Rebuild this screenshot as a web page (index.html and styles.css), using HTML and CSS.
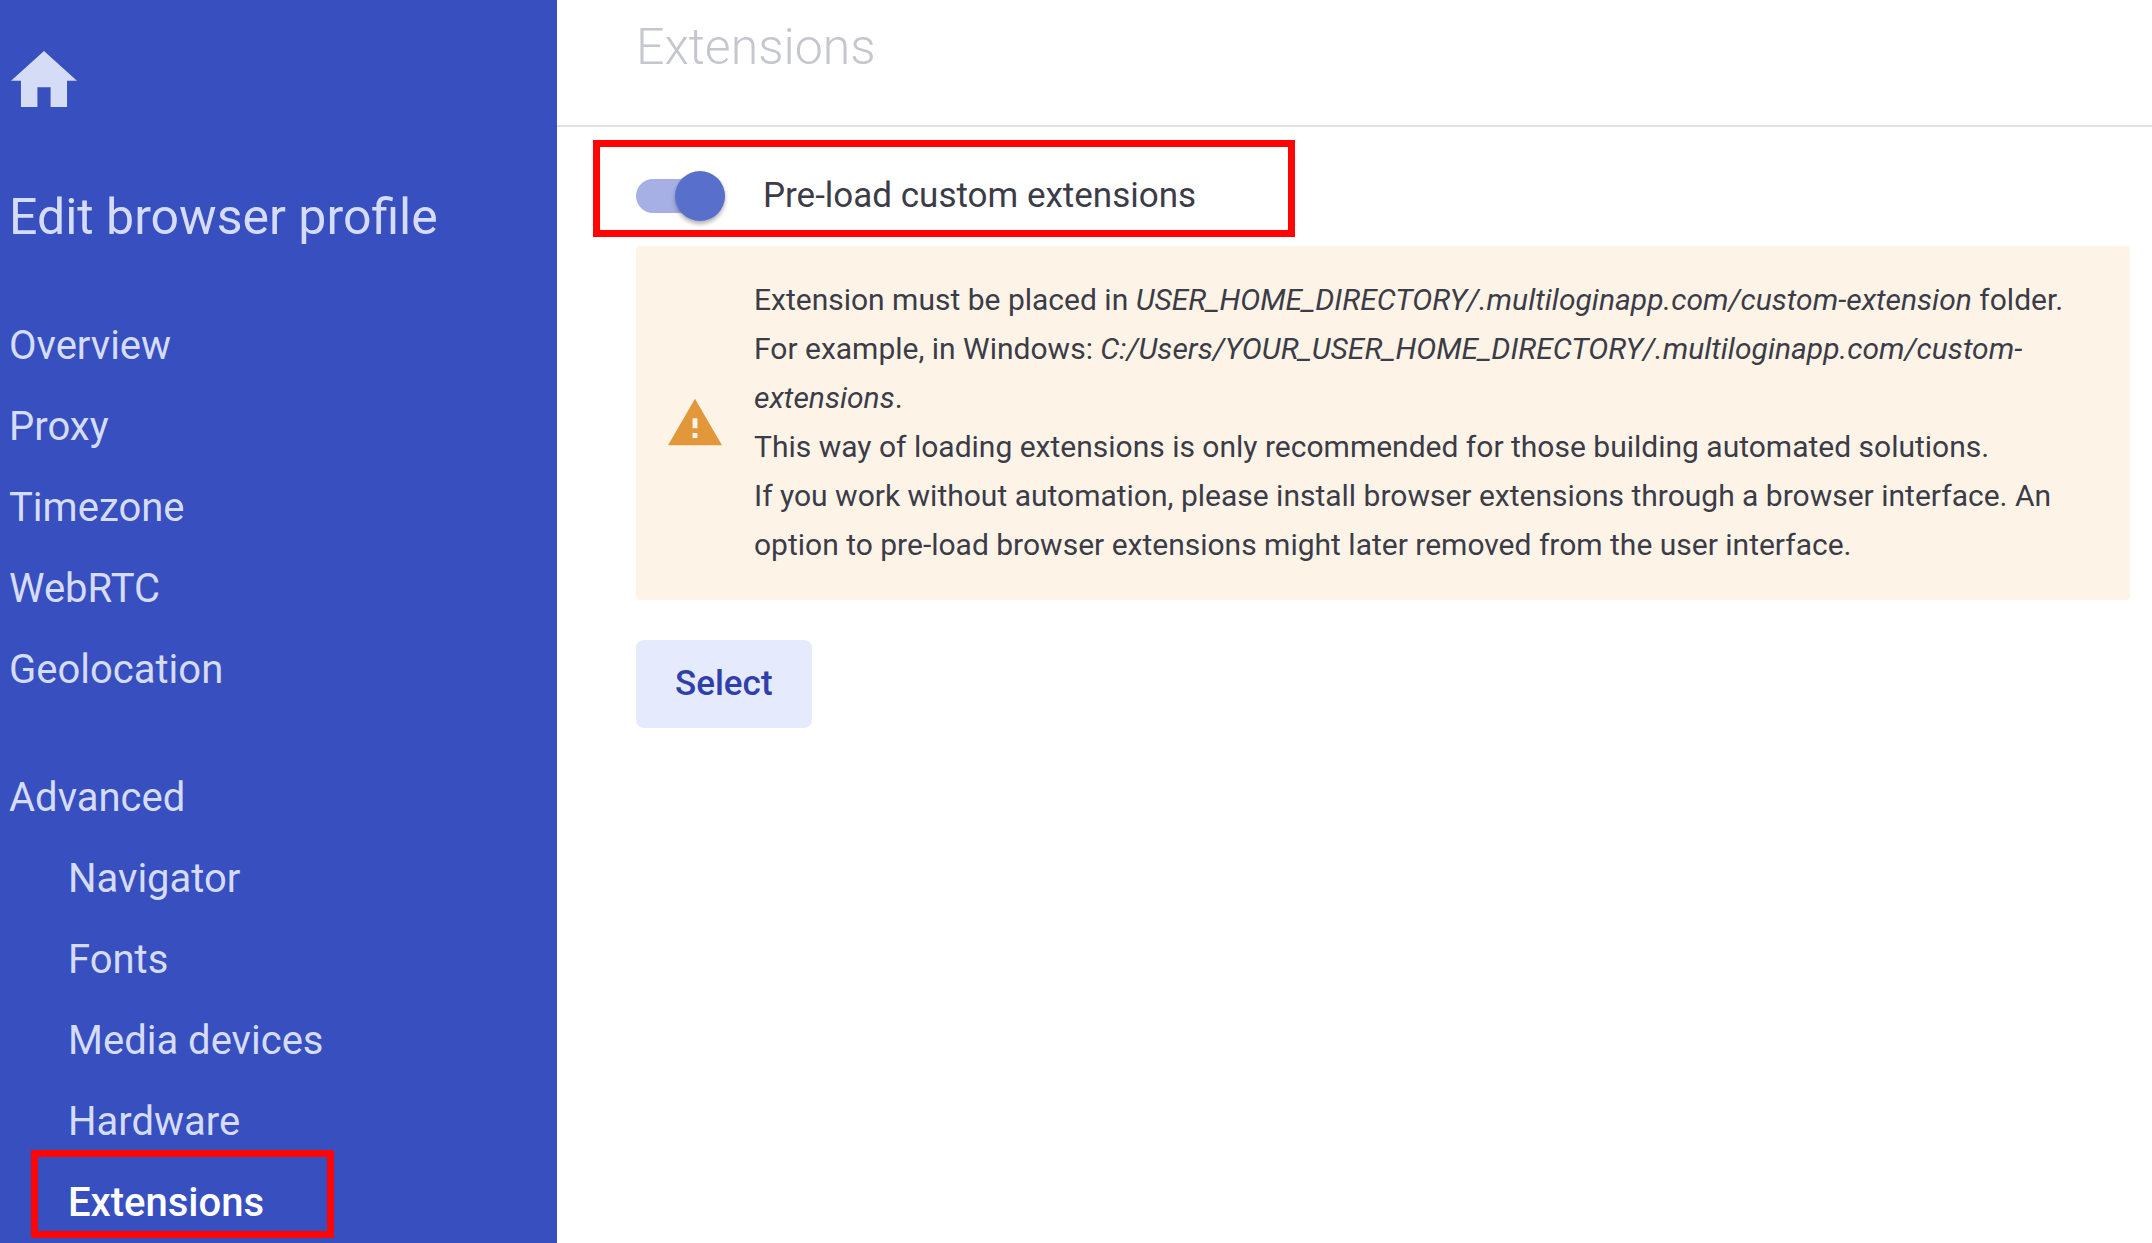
FILE: index.html
```html
<!DOCTYPE html>
<html lang="en">

<head>
    <meta charset="UTF-8">
    <meta name="viewport" content="width=device-width, initial-scale=1.0">
    <title>Edit browser profile</title>
    <link rel="stylesheet" href="styles.css">
</head>

<body>
    <aside class="sidebar">
        <a class="home" href="#" aria-label="Home">
            <svg width="66" height="56" viewBox="2 3 20 17"><path d="M10 20v-6h4v6h5v-8h3L12 3 2 12h3v8z"/></svg>
        </a>
        <h1>Edit browser profile</h1>
        <nav>
            <ul class="menu">
                <li><a href="#">Overview</a></li>
                <li><a href="#">Proxy</a></li>
                <li><a href="#">Timezone</a></li>
                <li><a href="#">WebRTC</a></li>
                <li><a href="#">Geolocation</a></li>
            </ul>
            <ul class="menu">
                <li><a href="#">Advanced</a></li>
                <li class="sub"><a href="#">Navigator</a></li>
                <li class="sub"><a href="#">Fonts</a></li>
                <li class="sub"><a href="#">Media devices</a></li>
                <li class="sub"><a href="#">Hardware</a></li>
                <li class="sub active"><a href="#">Extensions</a><span class="mark"></span></li>
            </ul>
        </nav>
    </aside>

    <main class="content">
        <header>
            <h2>Extensions</h2>
        </header>

        <section class="panel">
            <div class="option">
                <input type="checkbox" id="preload" class="switch" checked>
                <label for="preload">Pre-load custom extensions</label>
                <span class="mark"></span>
            </div>

            <div class="notice">
                <svg class="warning" width="54" height="48" viewBox="1 2 22 19">
                    <path fill="#e2973b" d="M1 21h22L12 2z"/>
                    <path fill="#fdf4e7" d="M11 16h2v2h-2zM11 10h2v4h-2z"/>
                </svg>
                <p>
                    Extension must be placed in <em>USER_HOME_DIRECTORY/.multiloginapp.com/custom-extension</em> folder.<br>
                    For example, in Windows: <em>C:/Users/YOUR_USER_HOME_DIRECTORY/.multiloginapp.com/custom-extensions</em>.<br>
                    This way of loading extensions is only recommended for those building automated solutions.<br>
                    If you work without automation, please install browser extensions through a browser interface. An option to pre-load browser extensions might later removed from the user interface.
                </p>
            </div>

            <button type="button" class="select">Select</button>
        </section>
    </main>
</body>

</html>
```

FILE: styles.css
```css
* {
    box-sizing: border-box;
}

body {
    margin: 0;
    display: flex;
    min-height: 100vh;
    background: #fff;
    color: #3b3c48;
    font-family: Roboto, "Liberation Sans", sans-serif;
}

h1, h2, p, ul {
    margin: 0;
    padding: 0;
}

/* sidebar */
.sidebar {
    flex: none;
    width: 557px;
    padding: 51px 9px 0;
    background: #374fbf;
    color: #d5dcf8;
}

.sidebar a {
    color: inherit;
    text-decoration: none;
}

.home svg {
    display: block;
    margin-left: 2px;
    fill: #d5dcf5;
}

.sidebar h1 {
    margin: 80px 0 75px;
    font-size: 50px;
    line-height: 60px;
    font-weight: 400;
}

.menu {
    display: flex;
    flex-direction: column;
    gap: 33px;
    list-style: none;
    font-size: 40px;
    line-height: 48px;
}

.menu + .menu {
    margin-top: 80px;
}

.menu .sub {
    position: relative;
    padding-left: 59px;
}

.menu .active {
    color: #fff;
    font-weight: 500;
}

/* red frames */
.mark {
    position: absolute;
    border: 7px solid #ff0505;
    pointer-events: none;
}

.active .mark {
    left: 22px;
    top: -29px;
    width: 303px;
    height: 88px;
}

.option .mark {
    left: -43px;
    top: -31px;
    width: 702px;
    height: 97px;
}

/* content */
.content {
    flex: 1;
    min-width: 0;
}

.content header {
    padding: 17px 79px 48px;
    border-bottom: 2px solid #e0e0e2;
}

.content h2 {
    color: #c5c6ce;
    font-size: 50px;
    line-height: 60px;
    font-weight: 300;
}

.panel {
    padding: 44px 22px 0 79px;
}

.option {
    position: relative;
    display: flex;
    align-items: center;
    gap: 38px;
    height: 50px;
    font-size: 35px;
    line-height: 40px;
}

.switch {
    appearance: none;
    position: relative;
    width: 89px;
    height: 34px;
    margin: 0;
    border-radius: 17px;
    background: #a6b0e4;
}

.switch::before {
    content: "";
    position: absolute;
    right: 0;
    top: -8px;
    width: 50px;
    height: 50px;
    border-radius: 50%;
    background: #5870cc;
    box-shadow: 0 3px 4px rgba(0, 0, 0, 0.3);
}

.notice {
    display: flex;
    align-items: center;
    gap: 32px;
    margin-top: 25px;
    padding: 29px 32px 31px;
    border-radius: 4px;
    background: #fdf4e7;
    font-size: 30px;
    line-height: 49px;
}

.warning {
    flex: none;
}

.select {
    display: block;
    margin-top: 40px;
    padding: 24px 39px;
    border: 0;
    border-radius: 8px;
    background: #e6eafd;
    color: #2f3fab;
    font-family: inherit;
    font-size: 35px;
    line-height: 40px;
    font-weight: 500;
}
```
